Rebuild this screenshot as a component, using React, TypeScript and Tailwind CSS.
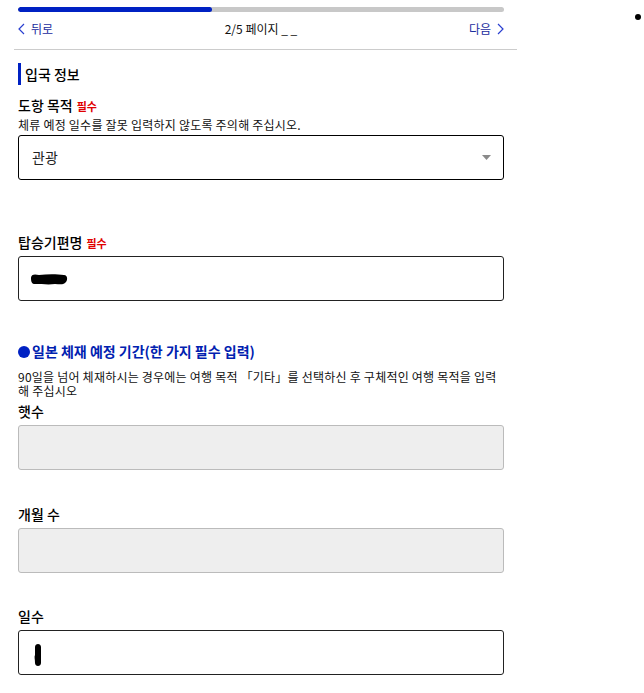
import React from "react";

const font = { fontFamily: '"Noto Sans CJK KR", "Noto Sans", sans-serif' };

function Label({ text, required }: { text: string; required?: boolean }) {
  return (
    <div className="flex items-baseline text-[14px] leading-[20px] text-black font-medium">
      <span>{text}</span>
      {required && <span className="ml-1 text-[11px] font-bold text-[#e00000]">필수</span>}
    </div>
  );
}

export default function App() {
  return (
    <div className="flex bg-white min-h-[693px]" style={font}>
      <div className="w-[517px] pl-[14px]">
        <div className="pl-[4px] pr-[13px] pt-[7px]">
          <div className="h-[5px] w-full rounded-full bg-[#c8c8c8] overflow-hidden">
            <div className="h-full w-[40%] rounded-full bg-[#0021c3]" />
          </div>
          <div className="mt-[9px] flex items-center justify-between text-[12px] leading-[16px]">
            <div className="flex items-center gap-[6px] text-[#1a2c9e]">
              <svg width="7" height="12" viewBox="0 0 7 12">
                <path d="M6 1 L1 6 L6 11" fill="none" stroke="#2a3fd0" strokeWidth="1.2" />
              </svg>
              <span>뒤로</span>
            </div>
            <div className="text-[#111]">2/5 페이지 _ _</div>
            <div className="flex items-center gap-[6px] text-[#1a2c9e]">
              <span>다음</span>
              <svg width="7" height="12" viewBox="0 0 7 12">
                <path d="M1 1 L6 6 L1 11" fill="none" stroke="#2a3fd0" strokeWidth="1.2" />
              </svg>
            </div>
          </div>
        </div>
        <div className="mt-[12px] h-[1px] bg-[#cccccc]" />
        <div className="pl-[4px] pr-[13px]">
          <div className="mt-[13px] flex items-center h-[22px]">
            <div className="w-[3px] h-[22px] bg-[#0021c3]" />
            <span className="ml-[4px] text-[14px] font-medium text-black">입국 정보</span>
          </div>

          <div className="mt-[10px]">
            <Label text="도항 목적" required />
            <div className="text-[12px] leading-[18px] tracking-[0.22px] text-[#111]">체류 예정 일수를 잘못 입력하지 않도록 주의해 주십시오.</div>
            <div className="mt-[1px] h-[45px] rounded-[3px] border border-black flex items-center justify-between pl-[13px] pr-[12px]">
              <span className="text-[14px] text-[#222]">관광</span>
              <svg width="9" height="6" viewBox="0 0 9 6">
                <path d="M0 0 L9 0 L4.5 5 Z" fill="#8a8a8a" />
              </svg>
            </div>
          </div>

          <div className="mt-[52px]">
            <Label text="탑승기편명" required />
            <div className="mt-[3px] h-[45px] rounded-[3px] border border-[#222] flex items-center pl-[10px]">
              <svg width="40" height="14" viewBox="0 0 40 14">
                <path d="M2 6 C2 2 6 2 10 3 C18 2 28 2 35 3 C39 3 39 9 36 11 C34 13 30 12 26 12 C20 13 12 12 6 12 C3 12 2 10 2 6 Z" fill="#000" />
              </svg>
            </div>
          </div>

          <div className="mt-[40px] flex items-center">
            <div className="w-[12px] h-[12px] rounded-full bg-[#0021c3]" />
            <span className="ml-[2px] text-[14px] font-bold text-[#0021b0]">일본 체재 예정 기간(한 가지 필수 입력)</span>
          </div>
          <div className="mt-[8px] text-[12px] leading-[14px] tracking-[0.22px] text-[#111]">
            90일을 넘어 체재하시는 경우에는 여행 목적 「기타」를 선택하신 후 구체적인 여행 목적을 입력 해 주십시오
          </div>

          <div className="mt-[3px]">
            <Label text="햇수" />
            <div className="mt-[4px] h-[45px] rounded-[3px] border border-[#bbbbbb] bg-[#eeeeee]" />
          </div>

          <div className="mt-[34px]">
            <Label text="개월 수" />
            <div className="mt-[4px] h-[45px] rounded-[3px] border border-[#bbbbbb] bg-[#eeeeee]" />
          </div>

          <div className="mt-[33px]">
            <Label text="일수" />
            <div className="mt-[4px] h-[45px] rounded-[3px] border border-[#222] flex items-center pl-[14px] pt-[4px]">
              <svg width="9" height="24" viewBox="0 0 9 24">
                <path d="M2 4 C2 0 8 0 8 4 L8 20 C8 24 2 24 2 20 C2 16 1 14 2 12 Z" fill="#000" />
              </svg>
            </div>
          </div>
        </div>
      </div>
      <div className="ml-[118px] mt-[14px]">
        <div className="w-[6px] h-[6px] rounded-full bg-black" />
      </div>
    </div>
  );
}
